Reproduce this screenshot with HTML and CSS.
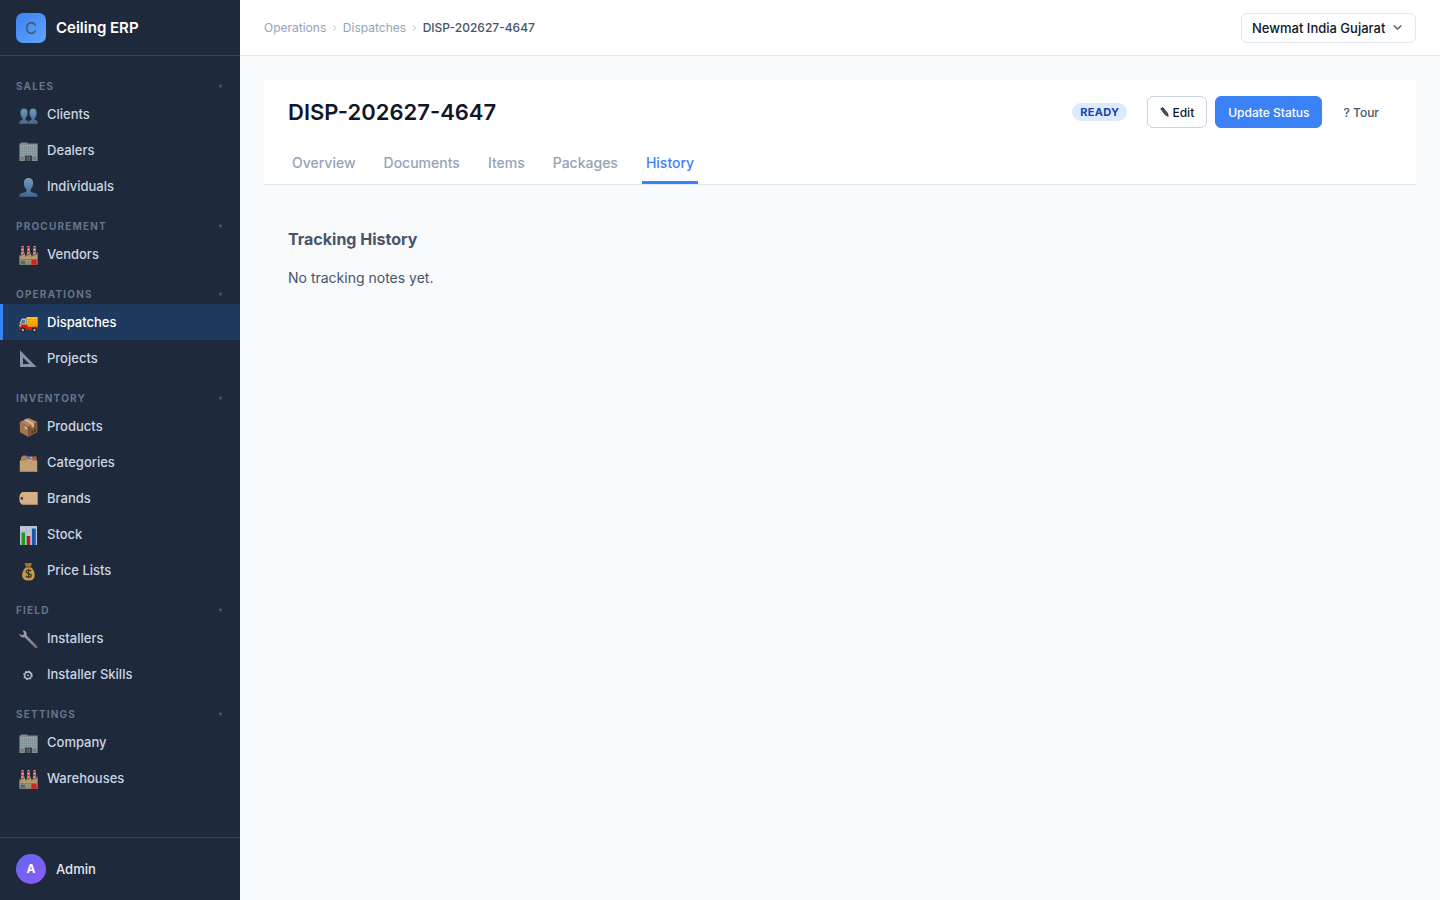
FILE: index.html
```html
<!DOCTYPE html>
<html lang="en">
<head>
<meta charset="utf-8">
<title>DISP-202627-4647 · Ceiling ERP</title>
<link rel="stylesheet" href="styles.css">
</head>
<body>
<svg class="defs" aria-hidden="true">
  <defs>
    <linearGradient id="skin" x1="0" y1="0" x2="0" y2="1"><stop offset="0" stop-color="#7199bb"/><stop offset="1" stop-color="#41688e"/></linearGradient>
    <linearGradient id="cargo" x1="0" y1="0" x2="0" y2="1"><stop offset="0" stop-color="#ffc21a"/><stop offset="1" stop-color="#f39a00"/></linearGradient>
    <linearGradient id="metal" x1="0" y1="0" x2="1" y2="1"><stop offset="0" stop-color="#a9b2bb"/><stop offset="1" stop-color="#75676a"/></linearGradient>
    <symbol id="i-people" viewBox="0 -4 19 24">
      <g fill="url(#skin)" stroke="#2c435c" stroke-width=".4"><path d="M14 2.500c-2.500 0-3.800 2-3.600 4.800.1 2.200 1 4 2 4.900v1.500c-1.300.6-3 1-3 3V18h9.300v-1.500c0-2-1.500-2.200-3-2.800v-1.500c1-.9 1.900-2.700 2-4.900.2-2.800-1.200-4.800-3.700-4.800Z"/><path d="M5 2.500c-2.500 0-3.800 2-3.600 4.800.1 2.200 1 4 2 4.900v1.500c-1.400.6-3.200 1-3.200 3V18h9.400v-1.500c0-2-1.600-2.200-3-2.800v-1.500c1-.9 1.900-2.700 2-4.900.2-2.800-1.100-4.800-3.600-4.800Z"/></g>
    </symbol>
    <symbol id="i-office" viewBox="0 -4 19 24">
      <path d="M2 .5h6.500v1.200H2zM.4 1.500h18.300V19H.4z" fill="#8b8a86"/>
      <path d="M1.500 3h16v11.500h-16z" fill="#93a6ae"/>
      <path d="M3.500 3v11.500M5.500 3v11.500M7.500 3v11.500M9.500 3v11.500M11.500 3v11.500M13.500 3v11.500M15.500 3v11.500M1.500 5.500h16M1.500 7.500h16M1.500 9.500h16M1.500 11.500h16" stroke="#768791" stroke-width=".5"/>
      <path d="M1.500 14.500h4V18h-4zM13.500 14.500h4V18h-4z" fill="#6f8088"/>
      <path d="M6 13.500h7V19H6z" fill="#34424b"/><path d="M8.500 14.500V19M10.500 14.500V19" stroke="#6d8790" stroke-width=".7"/>
    </symbol>
    <symbol id="i-person" viewBox="0 -4 19 24">
      <path d="M9.500 0C6.200 0 4.700 2.400 4.900 5.500c.1 2.700 1.200 4.700 2.500 5.800v2.200C5.300 15 .3 14.800.3 18v.8h18.400V18c0-3.200-5-3-7.100-4.500v-2.200c1.300-1.100 2.400-3.100 2.500-5.800.2-3.100-1.300-5.500-4.600-5.500Z" fill="url(#skin)"/>
    </symbol>
    <symbol id="i-factory" viewBox="0 -4 19 24">
      <path d="M2.700 0h1.700l.5 9H2.200zM8.700 0h1.700l.5 9H8.200zM14.700 0h1.700l.5 9h-2.700z" fill="#d7dadd"/>
      <path d="M2.700 .8h1.700v2H2.600zM2.400 4.500h2.200v2H2.300zM8.700 .8h1.700v2H8.600zM8.400 4.500h2.200v2H8.300zM14.700 .8h1.700v2h-1.800zM14.400 4.500h2.200v2h-2.300z" fill="#cc2128"/>
      <path d="M.4 18.700V9.500l5.600-3v3l6-3v3l6.600-3v12.200z" fill="#b59870"/>
      <path d="M.4 9.500l5.600-3v1.300l-5.600 3zM6 9.500l6-3v1.300l-6 3zM12 9.500l6.600-3v1.300l-6.600 3z" fill="#6b5741"/>
      <path d="M.4 13h18.200v.8H.4z" fill="#92764f"/>
      <path d="M1.500 14.500h5v3.700h-5z" fill="#41718a"/><path d="M7.700 14.500h3.500v3.700H7.700z" fill="#7d8b8b"/><path d="M12.300 13.800h5.400v4.900h-5.400z" fill="#cb2528"/>
    </symbol>
    <symbol id="i-truck" viewBox="0 -4 19 24">
      <path d="M7.500 3h11.200v10.500H7.500z" fill="url(#cargo)"/><path d="M8 5.500h10.500M8 8h10.500M8 10.500h10.500" stroke="#e68a00" stroke-width=".5"/>
      <path d="M2.800 4.500h4.700V11H.8V8.500z" fill="#a2c8ca"/><path d="M3.300 6H6v3.500H1.800z" fill="#5a7c83"/>
      <path d="M.4 10.500h7.300l1.500 2.300h9.500V16H.4z" fill="#d71d18"/><path d="M.4 11h1.500v1.200H.4z" fill="#f8dc75"/>
      <g fill="#29282b"><circle cx="3.800" cy="16" r="2.700"/><circle cx="15.500" cy="16" r="2.700"/></g><g fill="#a9a9ab"><circle cx="3.800" cy="16" r="1.200"/><circle cx="15.500" cy="16" r="1.200"/></g>
    </symbol>
    <symbol id="i-ruler" viewBox="0 -4 19 24">
      <path d="M1 .3 17.500 17H1zM4 7.500V14h6.500z" fill="#8793a6" fill-rule="evenodd"/>
    </symbol>
    <symbol id="i-box" viewBox="0 -4 19 24">
      <path d="M.7 4 9.500 0l9 4-9 5z" fill="#b98255"/><path d="M.7 4l8.800 5v10L1 14.300z" fill="#a87449"/><path d="M9.500 9l9-5v10.300L9.500 19z" fill="#85552f"/>
      <path d="M5 2l2.500-1.200L15 5.300v3.500L12.500 10V6.500z" fill="#c6b8a4"/><path d="M5.500 8l2.500 1.300v2.500l-2.500-1.300z" fill="#c6b8a4"/><path d="M12.500 13.200l1.500-.8v2.300l-1.500.8zM15 12l1.500-.8v2.300L15 14.300z" fill="#4c311f"/>
    </symbol>
    <symbol id="i-folder" viewBox="0 -4 19 24">
      <path d="M2 6V3.500L4 1.500h3l1 1h9.500v4H2z" fill="#b77d45"/><path d="M7.500 2h4v1.500h-4zM9 4.300h4v1.200H9z" fill="#4b5cb1"/><path d="M13 2.800h4v1.400h-4zM13.500 5h4v1.300h-4z" fill="#c93f42"/><path d="M11 3.200h2v1h-2z" fill="#d4d8dd"/>
      <path d="M.8 6.200h6.500l1-1h4.700l1 1h4.200V18H.8z" fill="#c2a274"/><path d="M.8 17h17.400v1H.8z" fill="#a3855b"/>
    </symbol>
    <symbol id="i-tag" viewBox="0 -4 19 24">
      <path d="M3.500 2h15.200v12.700H3.500C1.500 14.200.3 12 .3 8.400.3 5 1.500 2.600 3.500 2Z" fill="#d4b084"/><path d="M3.500 13.900h15.200v.8H3.500z" fill="#aa895f"/><circle cx="2.800" cy="8.400" r="1.300" fill="#3d3834"/>
    </symbol>
    <symbol id="i-chart" viewBox="0 -4 19 24">
      <path d="M1 0h17v19H1z" fill="#bdc6d0"/><path d="M1.500 5h16M1.500 10h16M1.500 15h16M7 0v19M12.500 0v19" stroke="#a5b0bd" stroke-width=".5"/>
      <path d="M2.500 6.500H6V19H2.500z" fill="#159d26"/><path d="M7.700 10h3.500v9H7.700z" fill="#b71d24"/><path d="M13 2.500h3.700V19H13z" fill="#1657b0"/>
    </symbol>
    <symbol id="i-money" viewBox="0 -4 19 24">
      <path d="M5.200 1c2.500.8 4-.6 7.800.2L11.500 5h-4z" fill="#a97937"/><path d="M7 5h5c2.300 2 3.700 5 3.700 8 0 3.700-2 5.500-6.200 5.500S3.200 16.700 3.200 13c0-3 1.500-6 3.800-8Z" fill="#c69a45"/><path d="M6.800 4.500h5.400v1.200H6.800z" fill="#745326"/>
      <path d="M12.200 9.200C11 7.700 7 7.800 7 9.800c0 2.200 5.300 1.200 5.300 3.700 0 2.200-4.300 2.200-5.600.3M9.500 7v9.300" fill="none" stroke="#3d3527" stroke-width="1.300"/>
    </symbol>
    <symbol id="i-wrench" viewBox="0 -4 19 24">
      <path d="M3.800.5c2.700-.2 4.500 2.300 3.700 4.700l10.700 11c1 1.200-.6 2.800-1.900 1.800L5.500 7.300C3 8 .6 6.300.5 3.800l2.700 1.700 2-1.700z" fill="url(#metal)"/><path d="M9 8l8 8.300" stroke="#a07c76" stroke-width=".5"/>
    </symbol>
  </defs>
</svg>
<div class="app">
  <aside class="sidebar">
    <div class="brand"><span class="logo">C</span><span class="brand-name">Ceiling ERP</span></div>
    <nav class="nav" aria-label="Main">
      <button class="group">Sales<span class="caret">▾</span></button>
      <a class="item" href="#"><svg class="icon"><use href="#i-people"/></svg>Clients</a>
      <a class="item" href="#"><svg class="icon"><use href="#i-office"/></svg>Dealers</a>
      <a class="item" href="#"><svg class="icon"><use href="#i-person"/></svg>Individuals</a>
      <button class="group">Procurement<span class="caret">▾</span></button>
      <a class="item" href="#"><svg class="icon"><use href="#i-factory"/></svg>Vendors</a>
      <button class="group">Operations<span class="caret">▾</span></button>
      <a class="item active" href="#" aria-current="page"><svg class="icon"><use href="#i-truck"/></svg>Dispatches</a>
      <a class="item" href="#"><svg class="icon"><use href="#i-ruler"/></svg>Projects</a>
      <button class="group">Inventory<span class="caret">▾</span></button>
      <a class="item" href="#"><svg class="icon"><use href="#i-box"/></svg>Products</a>
      <a class="item" href="#"><svg class="icon"><use href="#i-folder"/></svg>Categories</a>
      <a class="item" href="#"><svg class="icon"><use href="#i-tag"/></svg>Brands</a>
      <a class="item" href="#"><svg class="icon"><use href="#i-chart"/></svg>Stock</a>
      <a class="item" href="#"><svg class="icon"><use href="#i-money"/></svg>Price Lists</a>
      <button class="group">Field<span class="caret">▾</span></button>
      <a class="item" href="#"><svg class="icon"><use href="#i-wrench"/></svg>Installers</a>
      <a class="item" href="#"><svg class="icon" viewBox="0 0 19 24" fill="none" stroke="#b9c4d1"><circle cx="9" cy="13.300" r="3.300" stroke-width="1.300"/><circle cx="9" cy="13.300" r="4.200" stroke-width="1.200" stroke-dasharray="1.600 1.700"/><circle cx="9" cy="13.300" r=".9" fill="#b9c4d1" stroke="none"/></svg>Installer Skills</a>
      <button class="group">Settings<span class="caret">▾</span></button>
      <a class="item" href="#"><svg class="icon"><use href="#i-office"/></svg>Company</a>
      <a class="item" href="#"><svg class="icon"><use href="#i-factory"/></svg>Warehouses</a>
    </nav>
    <div class="user"><span class="avatar">A</span><span>Admin</span></div>
  </aside>
  <div class="main">
    <header class="topbar">
      <nav class="crumbs" aria-label="Breadcrumb">
        <a href="#">Operations</a><span class="sep">›</span><a href="#">Dispatches</a><span class="sep">›</span><span class="here">DISP-202627-4647</span>
      </nav>
      <div class="company">
        <select class="company-select" aria-label="Company"><option>Newmat India Gujarat</option></select>
        <svg class="chevron" viewBox="0 0 12 12" fill="none" stroke="#6b7280" stroke-width="1.500" stroke-linecap="round" stroke-linejoin="round"><path d="M3 4.500 6 7.500 9 4.500"/></svg>
      </div>
    </header>
    <main class="content">
      <section class="head">
        <div class="head-row">
          <h1 class="title">DISP-202627-4647</h1>
          <span class="badge">READY</span>
          <div class="actions">
            <button class="btn"><svg class="pencil" viewBox="0 0 9 10" aria-hidden="true"><path d="M.8 1.800 2.800.5 7.300 6l.9 3.300L5.200 7.800z" fill="#64686f" stroke="#0f172a" stroke-width=".8"/><path d="M1.800 1.200 6.300 7" stroke="#0f172a" stroke-width=".6"/></svg>Edit</button>
            <button class="btn primary">Update Status</button>
            <button class="btn ghost">? Tour</button>
          </div>
        </div>
        <div class="tabs" role="tablist">
          <button class="tab" role="tab">Overview</button>
          <button class="tab" role="tab">Documents</button>
          <button class="tab" role="tab">Items</button>
          <button class="tab" role="tab">Packages</button>
          <button class="tab selected" role="tab" aria-selected="true">History</button>
        </div>
      </section>
      <section class="panel">
        <h2 class="panel-title">Tracking History</h2>
        <p class="empty">No tracking notes yet.</p>
      </section>
    </main>
  </div>
</div>
</body>
</html>
```
FILE: styles.css
```css
* { box-sizing: border-box; }
body { margin: 0; font-family: Inter, sans-serif; font-size: 14px; line-height: 20px; color: #475569; background: #f8fafc; }
button, select { font-family: inherit; margin: 0; cursor: pointer; }
a { color: inherit; text-decoration: none; }
h1, h2, p { margin: 0; }
.defs { position: absolute; width: 0; height: 0; }

.app { display: flex; min-height: 100vh; }
.sidebar { display: flex; flex-direction: column; flex: 0 0 240px; background: #1e293b; }
.brand { display: flex; align-items: center; gap: 10px; height: 56px; padding: 0 16px; border-bottom: 1px solid #334155; }
.logo { display: flex; align-items: center; justify-content: center; width: 30px; height: 30px; border-radius: 7px; background: linear-gradient(135deg, #3b82f6, #60a5fa); color: #475569; font-size: 16px; }
.brand-name { color: #fff; font-size: 15px; font-weight: 600; }
.nav { display: flex; flex-direction: column; flex: 1; padding: 8px 0; }
.group { display: flex; align-items: center; justify-content: space-between; padding: 16px 16px 4px; border: 0; background: none; color: #64748b; font-size: 10px; font-weight: 700; line-height: 12px; letter-spacing: 1.2px; text-transform: uppercase; }
.caret { padding-right: 1px; font-size: 6px; opacity: .7; }
.item { display: flex; align-items: center; gap: 9px; height: 36px; padding: 0 16px; border-left: 3px solid transparent; color: #cbd5e1; font-size: 13px; font-weight: 500; }
.item.active { border-left-color: #3b82f6; background: #1e3a5f; color: #fff; }
.icon { flex: none; width: 19px; height: 24px; }
.user { display: flex; align-items: center; gap: 10px; padding: 16px; border-top: 1px solid #334155; color: #e2e8f0; font-size: 13px; font-weight: 500; }
.avatar { display: flex; align-items: center; justify-content: center; width: 30px; height: 30px; border-radius: 50%; background: linear-gradient(135deg, #6366f1, #8b5cf6); color: #fff; font-size: 12px; font-weight: 700; }

.main { display: flex; flex-direction: column; flex: 1; min-width: 0; }
.topbar { display: flex; align-items: center; justify-content: space-between; height: 56px; padding: 0 24px; border-bottom: 1px solid #e2e8f0; background: #fff; }
.crumbs { display: flex; align-items: center; gap: 6px; color: #94a3b8; font-size: 12px; }
.sep { color: #cbd5e1; }
.here { color: #475569; font-weight: 500; }
.company { display: grid; align-items: center; }
.company-select { grid-area: 1 / 1; appearance: none; height: 30px; padding: 0 29px 0 10px; border: 1px solid #e2e8f0; border-radius: 6px; background: #fff; color: #0f172a; font-size: 13px; font-weight: 500; }
.chevron { grid-area: 1 / 1; justify-self: end; width: 13px; height: 13px; margin-right: 12px; pointer-events: none; }

.content { padding: 24px; }
.head { border-bottom: 1px solid #e2e8f0; background: #fff; }
.head-row { display: flex; align-items: center; padding: 16px 24px; }
.title { flex: 1; color: #0f172a; font-size: 22px; font-weight: 600; line-height: 32px; }
.badge { padding: 2px 8px; border-radius: 9px; background: #dbeafe; color: #1e40af; font-size: 11px; font-weight: 700; line-height: 14px; letter-spacing: .3px; }
.actions { display: flex; gap: 8px; margin-left: 20px; }
.btn { display: flex; align-items: center; height: 32px; padding: 0 12px; border: 1px solid #cbd5e1; border-radius: 6px; background: #fff; color: #0f172a; font-size: 12px; font-weight: 500; }
.pencil { width: 9px; height: 10px; margin-right: 3px; }
.btn.primary { border-color: #3b82f6; background: #3b82f6; color: #fff; }
.btn.ghost { border-color: transparent; background: none; color: #475569; }
.tabs { display: flex; gap: 20px; padding: 0 24px; }
.tab { height: 40px; padding: 0 4px; border: 0; border-bottom: 3px solid transparent; background: none; color: #94a3b8; font-size: 14px; font-weight: 500; }
.tab.selected { border-bottom-color: #3b82f6; color: #3b82f6; }
.panel { padding: 44px 24px 24px; }
.panel-title { font-size: 16px; font-weight: 700; line-height: 20px; }
.empty { margin-top: 19px; }
```
